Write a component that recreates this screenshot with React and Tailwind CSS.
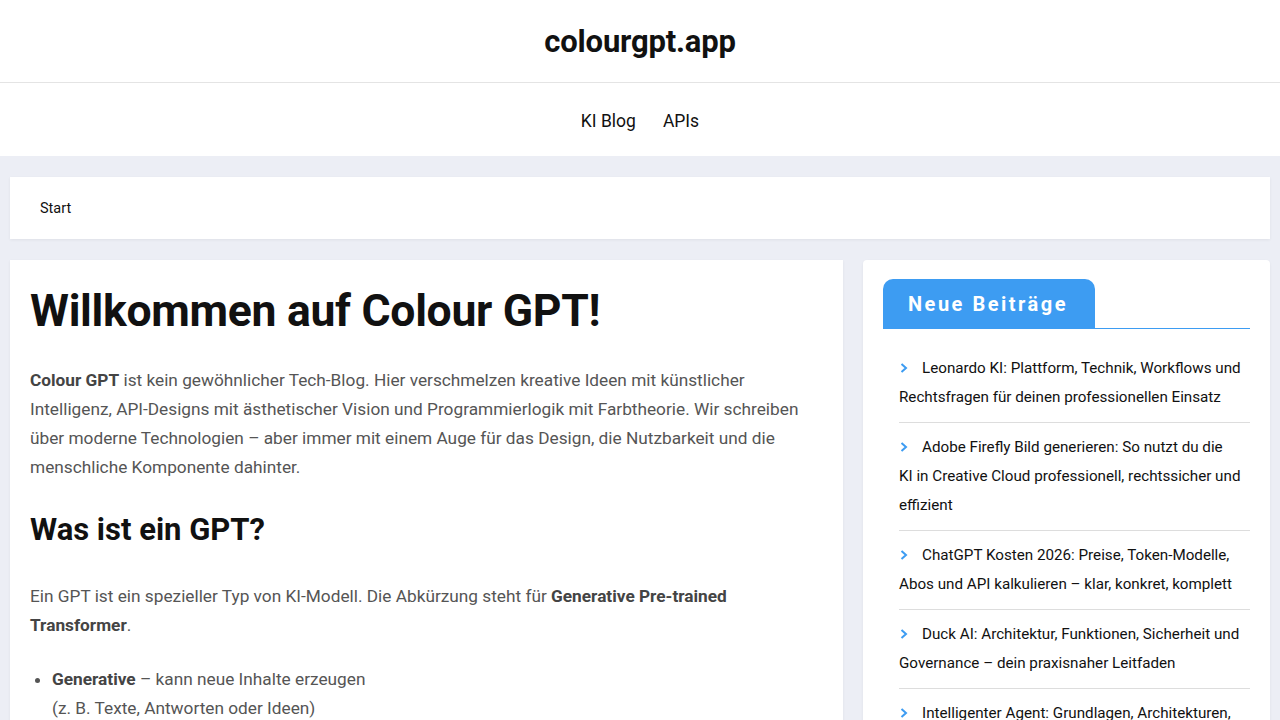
import React from "react";

const font = { fontFamily: "Roboto, 'Liberation Sans', sans-serif" };

const posts = [
  ["Leonardo KI: Plattform, Technik, Workflows und", "Rechtsfragen für deinen professionellen Einsatz"],
  ["Adobe Firefly Bild generieren: So nutzt du die", "KI in Creative Cloud professionell, rechtssicher und", "effizient"],
  ["ChatGPT Kosten 2026: Preise, Token-Modelle,", "Abos und API kalkulieren – klar, konkret, komplett"],
  ["Duck AI: Architektur, Funktionen, Sicherheit und", "Governance – dein praxisnaher Leitfaden"],
  ["Intelligenter Agent: Grundlagen, Architekturen,", "Praxis"],
];

function Chevron() {
  return (
    <svg width="10" height="12" viewBox="0 0 10 12" className="inline-block mr-[13px] -mt-[2px] align-middle">
      <path d="M2.5 2 L7 6 L2.5 10" fill="none" stroke="#3d9cf2" strokeWidth="2" />
    </svg>
  );
}

export default function App() {
  return (
    <div className="bg-[#eceef5] overflow-hidden h-[720px]" style={font}>
      <header className="bg-white h-[83px] border-b border-[#e4e4e4] flex items-center justify-center pt-[3px]">
        <div className="text-[31px] font-bold text-[#111] tracking-[-0.2px]">colourgpt.app</div>
      </header>
      <nav className="bg-white h-[73px] flex items-center justify-center gap-[27px] text-[17.5px] text-[#111] pt-[3px]">
        <span>KI Blog</span>
        <span>APIs</span>
      </nav>
      <div className="px-[10px] pt-[21px]">
        <div className="bg-white h-[62px] flex items-center pl-[30px] text-[14.5px] text-[#111] shadow-[0_1px_3px_rgba(0,0,0,0.06)] pt-[1px]">
          Start
        </div>
        <div className="flex gap-[20px] mt-[21px]">
          <main className="bg-white w-[833px] shrink-0 px-[20px] pt-[24px] h-[500px] shadow-[0_1px_3px_rgba(0,0,0,0.06)]">
            <h1 className="text-[44.5px] font-bold text-[#111] leading-[54px] tracking-[-0.3px]">Willkommen auf Colour GPT!</h1>
            <p className="mt-[28px] text-[17.25px] leading-[29px] text-[#555] whitespace-nowrap">
              <b className="text-[#444]">Colour GPT</b> ist kein gewöhnlicher Tech-Blog. Hier verschmelzen kreative Ideen mit künstlicher<br />
              Intelligenz, API-Designs mit ästhetischer Vision und Programmierlogik mit Farbtheorie. Wir schreiben<br />
              über moderne Technologien – aber immer mit einem Auge für das Design, die Nutzbarkeit und die<br />
              menschliche Komponente dahinter.
            </p>
            <h2 className="mt-[28px] text-[31px] font-bold text-[#111] leading-[40px]">Was ist ein GPT?</h2>
            <p className="mt-[32px] text-[17.25px] leading-[29px] text-[#555] whitespace-nowrap">
              Ein GPT ist ein spezieller Typ von KI-Modell. Die Abkürzung steht für <b className="text-[#444]">Generative Pre-trained</b><br />
              <b className="text-[#444]">Transformer</b>.
            </p>
            <ul className="mt-[25px] text-[17.25px] leading-[29px] text-[#555] list-disc pl-[22px] whitespace-nowrap">
              <li>
                <b className="text-[#444]">Generative</b> – kann neue Inhalte erzeugen<br />
                (z. B. Texte, Antworten oder Ideen)
              </li>
            </ul>
          </main>
          <aside className="bg-white w-[407px] shrink-0 overflow-hidden rounded-[4px] px-[20px] pt-[19px] h-[500px] shadow-[0_1px_3px_rgba(0,0,0,0.06)]">
            <div className="border-b border-[#3d9cf2]">
              <div className="inline-flex items-center bg-[#3d9cf2] text-white font-bold text-[20px] tracking-[2.5px] h-[49px] pl-[25px] rounded-t-[10px] w-[212px]">
                Neue Beiträge
              </div>
            </div>
            <ul className="mt-[25px] pl-[16px] text-[15.2px] leading-[29px] text-[#111] whitespace-nowrap">
              {posts.map((lines, i) => (
                <li key={i} className={i > 0 ? "border-t border-[#dddddd] pt-[10px] pb-[10px]" : "pb-[10px]"}>
                  <Chevron />
                  {lines.map((l, j) => (
                    <React.Fragment key={j}>
                      {j > 0 && <br />}
                      {l}
                    </React.Fragment>
                  ))}
                </li>
              ))}
            </ul>
          </aside>
        </div>
      </div>
    </div>
  );
}
